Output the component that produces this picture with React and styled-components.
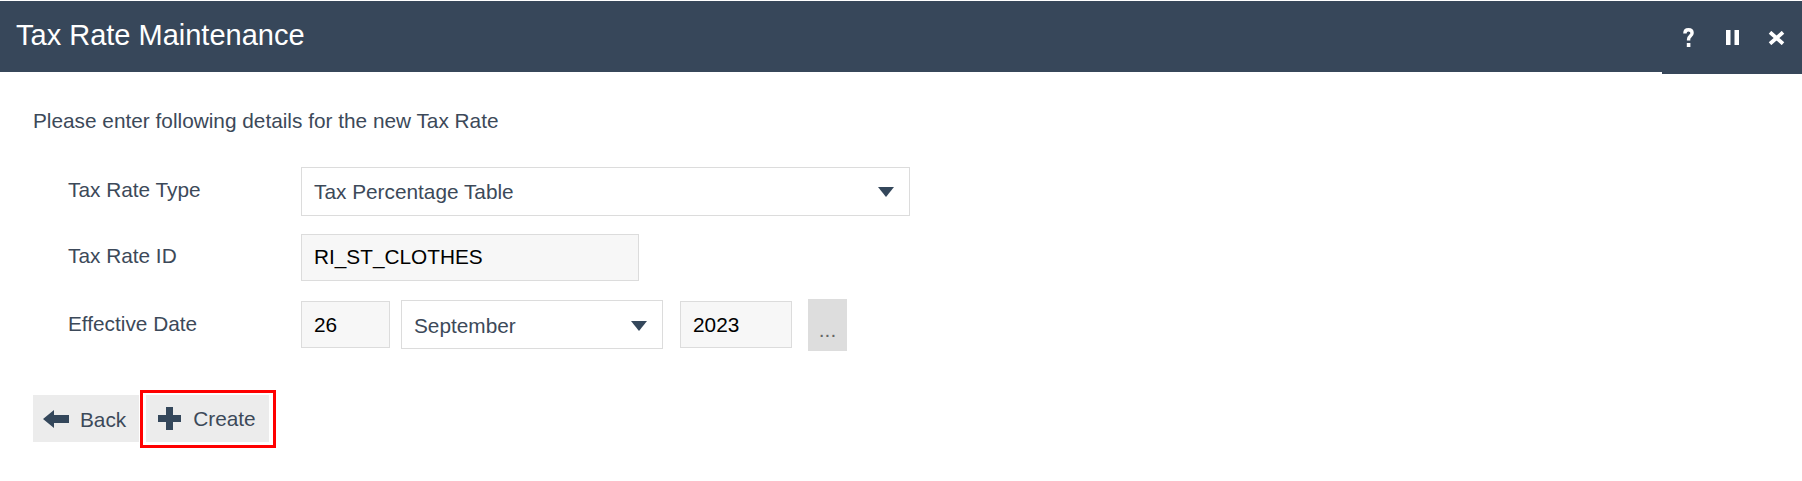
import React from "react";
import styled, { createGlobalStyle } from "styled-components";

const colors = {
  header: "#37475a",
  text: "#3c4959",
  icon: "#34475b",
  border: "#dcdcdc",
  field: "#f7f7f7",
  button: "#ececec",
  dots: "#dddddd",
  highlight: "#ff0000",
};

const GlobalStyle = createGlobalStyle`
  body {
    margin: 0;
    background: #ffffff;
    font-family: "Liberation Sans", Arial, sans-serif;
    font-size: 20.8px;
    line-height: 1.15;
    color: ${colors.text};
  }
`;

const PageSC = styled.div`
  padding-top: 1px;
`;

const HeaderSC = styled.header`
  display: flex;
  align-items: flex-start;
  height: 71px;
  background: ${colors.header};
`;

const TitleSC = styled.h1`
  flex: 1;
  display: flex;
  align-items: center;
  box-sizing: border-box;
  height: 71px;
  margin: 0;
  padding: 0 0 2px 16px;
  font-size: 29px;
  font-weight: normal;
  line-height: 1.15;
  color: #ffffff;
`;

const HeaderToolsSC = styled.div`
  display: flex;
  box-sizing: border-box;
  width: 140px;
  height: 73px;
  padding: 0 4px;
  background: ${colors.header};
`;

const ToolButtonSC = styled.button`
  width: 44px;
  display: flex;
  align-items: center;
  justify-content: center;
  padding: 0;
  border: none;
  background: transparent;
  color: #ffffff;
`;

const ContentSC = styled.main`
  padding: 0 33px;
`;

const IntroSC = styled.p`
  margin: 37px 0 0;
`;

const FormSC = styled.div`
  display: flex;
  flex-direction: column;
  gap: 18px;
  margin-top: 34px;
  padding-left: 35px;
`;

const RowSC = styled.div`
  display: flex;
  align-items: center;
`;

const LabelSC = styled.label`
  flex-shrink: 0;
  width: 233px;
  padding-bottom: 2px;
`;

const SelectSC = styled.div`
  display: flex;
  align-items: center;
  justify-content: space-between;
  box-sizing: border-box;
  width: ${props => props.$width}px;
  height: 49px;
  margin-left: ${props => props.$offset || 0}px;
  padding: 2px 15px 0 12px;
  border: 1px solid ${colors.border};
  background: #ffffff;
  color: ${colors.text};
`;

const InputSC = styled.input`
  box-sizing: border-box;
  width: ${props => props.$width}px;
  height: 47px;
  margin: 0 0 0 ${props => props.$offset || 0}px;
  padding: 0 12px;
  border: 1px solid ${colors.border};
  background: ${colors.field};
  font: inherit;
  color: #000000;
  outline: none;
`;

const DateRowSC = styled.div`
  display: flex;
  align-items: center;
  gap: 11px;
`;

const PickerButtonSC = styled.button`
  display: flex;
  justify-content: center;
  align-items: flex-start;
  box-sizing: border-box;
  width: 39px;
  height: 52px;
  margin-left: 5px;
  padding: 19px 0 0;
  border: none;
  background: ${colors.dots};
  font: inherit;
  color: #666666;
`;

const ActionsSC = styled.div`
  display: flex;
  align-items: center;
  margin-top: 39px;
`;

const ActionButtonSC = styled.button`
  display: flex;
  align-items: center;
  gap: 9px;
  height: 47px;
  padding: 2px 13px 0 8px;
  border: none;
  background: ${colors.button};
  font: inherit;
  color: ${colors.text};
`;

const IconBoxSC = styled.span`
  display: flex;
  justify-content: center;
  width: 30px;
  margin-top: -2px;
  color: ${colors.icon};
`;

const HighlightSC = styled.div`
  margin-left: 1px;
  padding: 2px 4px 3px 3px;
  border: 3px solid ${colors.highlight};
`;

// icons

const Caret = () => (
  <svg width="16" height="10" viewBox="0 0 16 10">
    <path d="M0 0 H16 L8 10 Z" fill={colors.icon} />
  </svg>
);

const QuestionIcon = () => (
  <svg width="11" height="19" viewBox="0 0 11 19">
    <path
      d="M1.9 5.4 C1.9 2.9 3.5 1.7 5.4 1.7 C7.6 1.7 9.1 3 9.1 4.9 C9.1 7.9 5.6 8.1 5.6 11.2 V12.4"
      fill="none"
      stroke="currentColor"
      strokeWidth="3.4"
    />
    <rect x="3.8" y="15" width="3.6" height="4" fill="currentColor" />
  </svg>
);

const PauseIcon = () => (
  <svg width="13" height="15" viewBox="0 0 13 15">
    <rect x="0" y="0" width="4.5" height="15" fill="currentColor" />
    <rect x="8.5" y="0" width="4.5" height="15" fill="currentColor" />
  </svg>
);

const CloseIcon = () => (
  <svg width="17" height="14" viewBox="0 0 17 14">
    <path d="M2 1.3 L15 12.7 M15 1.3 L2 12.7" stroke="currentColor" strokeWidth="3.8" />
  </svg>
);

const ArrowLeftIcon = () => (
  <svg width="26" height="18" viewBox="0 0 26 18">
    <path d="M0 9 L11 0 V5 H26 V13 H11 V18 Z" fill="currentColor" />
  </svg>
);

const PlusIcon = () => (
  <svg width="23" height="23" viewBox="0 0 23 23">
    <path d="M8 0 H15 V8 H23 V15 H15 V23 H8 V15 H0 V8 H8 Z" fill="currentColor" />
  </svg>
);

const App = () => (
  <PageSC>
    <GlobalStyle />
    <HeaderSC>
      <TitleSC>Tax Rate Maintenance</TitleSC>
      <HeaderToolsSC>
        <ToolButtonSC title="Help">
          <QuestionIcon />
        </ToolButtonSC>
        <ToolButtonSC title="Pause">
          <PauseIcon />
        </ToolButtonSC>
        <ToolButtonSC title="Close">
          <CloseIcon />
        </ToolButtonSC>
      </HeaderToolsSC>
    </HeaderSC>

    <ContentSC>
      <IntroSC>Please enter following details for the new Tax Rate</IntroSC>

      <FormSC>
        <RowSC>
          <LabelSC>Tax Rate Type</LabelSC>
          <SelectSC $width={609}>
            <span>Tax Percentage Table</span>
            <Caret />
          </SelectSC>
        </RowSC>
        <RowSC>
          <LabelSC>Tax Rate ID</LabelSC>
          <InputSC $width={338} value="RI_ST_CLOTHES" readOnly />
        </RowSC>
        <RowSC>
          <LabelSC>Effective Date</LabelSC>
          <DateRowSC>
            <InputSC $width={89} value="26" readOnly />
            <SelectSC $width={262}>
              <span>September</span>
              <Caret />
            </SelectSC>
            <InputSC $width={112} $offset={6} value="2023" readOnly />
            <PickerButtonSC>...</PickerButtonSC>
          </DateRowSC>
        </RowSC>
      </FormSC>

      <ActionsSC>
        <ActionButtonSC>
          <IconBoxSC>
            <ArrowLeftIcon />
          </IconBoxSC>
          Back
        </ActionButtonSC>
        <HighlightSC>
          <ActionButtonSC>
            <IconBoxSC>
              <PlusIcon />
            </IconBoxSC>
            Create
          </ActionButtonSC>
        </HighlightSC>
      </ActionsSC>
    </ContentSC>
  </PageSC>
);

export default App;
